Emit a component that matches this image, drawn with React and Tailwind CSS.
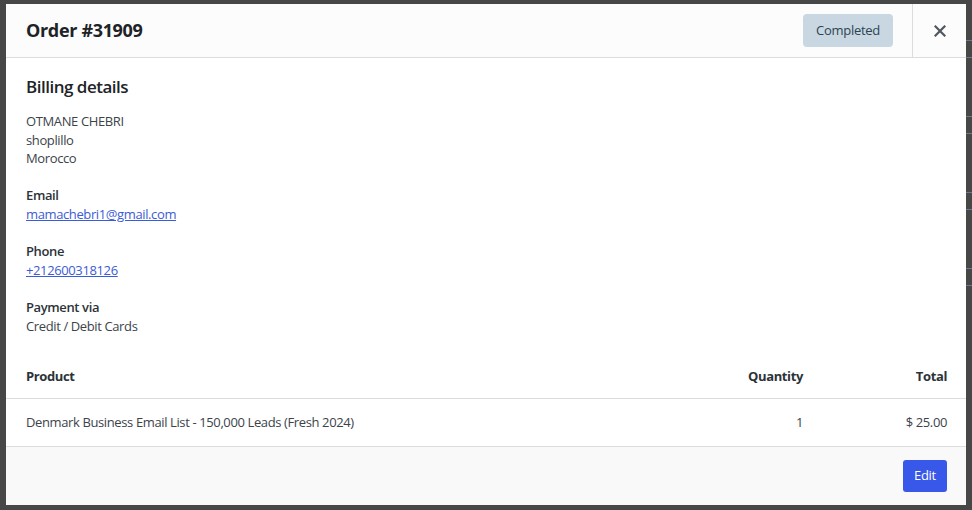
export default function App() {
  const font = { fontFamily: '"Open Sans", "Noto Sans", sans-serif' };
  return (
    <div className="relative w-[972px] h-[510px] bg-[#474747] overflow-hidden" style={font}>
      <div className="absolute left-[966px] top-[40px] w-[6px] h-[360px] flex flex-col gap-[58px]">
        <div className="h-[18px] border-t border-b border-[#6a7a8a]"></div>
        <div className="h-[18px] border-t border-b border-[#6a7a8a]"></div>
        <div className="h-[18px] border-t border-b border-[#6a7a8a]"></div>
        <div className="h-[18px] border-t border-b border-[#6a7a8a]"></div>
      </div>
      <div className="absolute left-[6px] top-[4px] w-[960px] h-[501px] bg-white flex flex-col">
        <div className="h-[54px] shrink-0 flex items-stretch border-b border-[#dcdcde] bg-[#fcfcfc]">
          <div className="flex-1 flex items-center pl-[20px] text-[18px] font-bold tracking-[-0.33px] text-[#1d2327]">
            Order #31909
          </div>
          <div className="flex items-center pr-[19px]">
            <span className="h-[33px] w-[90px] flex items-center justify-center rounded-[4px] bg-[#c8d7e1] text-[13px] tracking-[-0.3px] text-[#2e4453]">
              Completed
            </span>
          </div>
          <div className="w-[54px] border-l border-[#dcdcde] flex items-center justify-center">
            <svg width="12" height="12" viewBox="0 0 12 12" fill="none" stroke="#50575e" strokeWidth="2.2" strokeLinecap="square">
              <path d="M1.5 1.5L10.5 10.5M10.5 1.5L1.5 10.5" />
            </svg>
          </div>
        </div>
        <div className="px-[20px] pt-[17px] text-[13px] tracking-[-0.38px] text-[#3c434a] leading-[18.6px]">
          <h2 className="text-[17px] leading-[24px] font-semibold tracking-[-0.5px] text-[#1d2327]">Billing details</h2>
          <div className="mt-[13px]">
            <div>OTMANE CHEBRI</div>
            <div>shoplillo</div>
            <div>Morocco</div>
          </div>
          <div className="mt-[18.6px]">
            <div className="font-semibold text-[#2c3338]">Email</div>
            <a className="text-[#3c5bd6] underline">mamachebri1@gmail.com</a>
          </div>
          <div className="mt-[18.6px]">
            <div className="font-semibold text-[#2c3338]">Phone</div>
            <a className="text-[#3c5bd6] underline">+212600318126</a>
          </div>
          <div className="mt-[18.6px]">
            <div className="font-semibold text-[#2c3338]">Payment via</div>
            <div>Credit / Debit Cards</div>
          </div>
        </div>
        <div className="mt-[19px] text-[13px] tracking-[-0.38px] text-[#3c434a]">
          <div className="h-[45px] pt-[2px] flex items-center border-b border-[#dcdcde] px-[19px] font-bold text-[#2c3338]">
            <div className="flex-1 pl-[1px]">Product</div>
            <div className="w-[120px] text-right">Quantity</div>
            <div className="w-[144px] text-right">Total</div>
          </div>
          <div className="h-[47px] flex items-center px-[19px]">
            <div className="flex-1 pl-[1px]">Denmark Business Email List - 150,000 Leads (Fresh 2024)</div>
            <div className="w-[120px] text-right">1</div>
            <div className="w-[144px] text-right">$ 25.00</div>
          </div>
        </div>
        <div className="flex-1 border-t border-[#dcdcde] bg-[#f9f9f9] flex items-center justify-end pr-[19px]">
          <button className="w-[44px] h-[32px] rounded-[3px] bg-[#3858e9] text-white text-[13px] tracking-[-0.3px]">Edit</button>
        </div>
      </div>
    </div>
  );
}
